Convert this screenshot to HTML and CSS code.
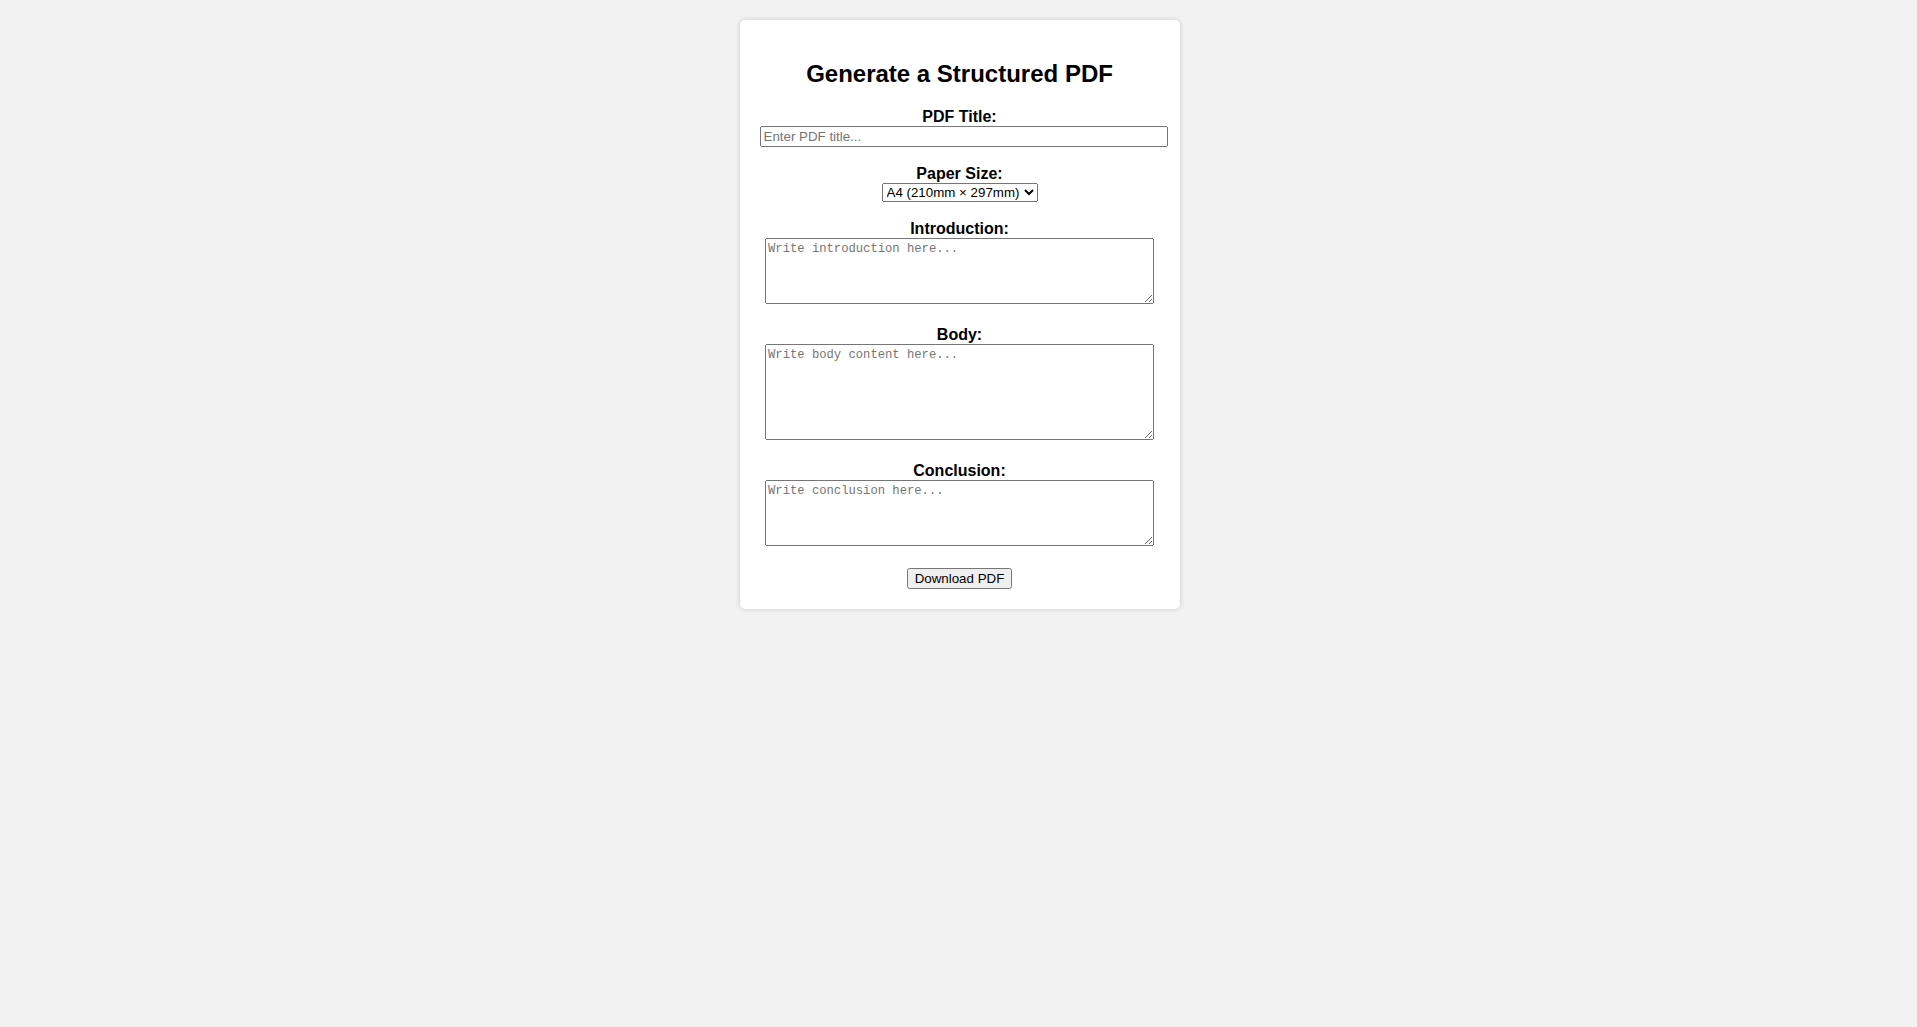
FILE: index.html
```
<!DOCTYPE html>
<html lang="en">
<head>
<meta charset="utf-8">
<title>Generate a Structured PDF</title>
<link rel="stylesheet" href="styles.css">
</head>
<body>
<div class="card">
  <h2 class="title">Generate a Structured PDF</h2>
  <div class="field">
    <label class="label" for="pdfTitle">PDF Title:</label>
    <input class="text-input" id="pdfTitle" type="text" placeholder="Enter PDF title...">
  </div>
  <div class="field field-center">
    <label class="label" for="paperSize">Paper Size:</label>
    <select class="select" id="paperSize">
      <option>A4 (210mm × 297mm)</option>
      <option>Letter (216mm × 279mm)</option>
      <option>Legal (216mm × 356mm)</option>
    </select>
  </div>
  <div class="field field-center field-area">
    <label class="label" for="intro">Introduction:</label>
    <textarea class="area area-short" id="intro" placeholder="Write introduction here..."></textarea>
  </div>
  <div class="field field-center field-area">
    <label class="label" for="body">Body:</label>
    <textarea class="area area-tall" id="body" placeholder="Write body content here..."></textarea>
  </div>
  <div class="field field-center field-last">
    <label class="label" for="conclusion">Conclusion:</label>
    <textarea class="area area-short" id="conclusion" placeholder="Write conclusion here..."></textarea>
  </div>
  <div class="actions">
    <button class="button" type="button">Download PDF</button>
  </div>
</div>
</body>
</html>
```
FILE: styles.css
```
html, body {
  margin: 0;
  padding: 0;
}
body {
  background: #f2f2f2;
  font-family: "Liberation Sans", Arial, sans-serif;
  font-size: 16px;
  color: #000;
  padding-left: 2px;
}
.card {
  width: 400px;
  margin: 20px auto;
  padding: 20px;
  background: #fff;
  border-radius: 5px;
  box-shadow: 0 0 5px rgba(0, 0, 0, 0.18);
  text-align: center;
}
.title {
  font-size: 24px;
  font-weight: bold;
  margin: 20px 0 19.5px;
  line-height: normal;
}
.field {
  display: flex;
  flex-direction: column;
  align-items: flex-start;
  margin-bottom: 18px;
}
.field-center {
  align-items: center;
}
.field-area {
  margin-bottom: 22px;
}
.field-last {
  margin-bottom: 22px;
}
.label {
  display: block;
  align-self: stretch;
  font-weight: bold;
  line-height: normal;
  text-align: center;
}
.text-input {
  display: block;
  width: 100%;
  margin: 0;
  font-family: "Liberation Sans", Arial, sans-serif;
  font-size: 13.333px;
  flex-shrink: 0;
}
.select {
  display: block;
  margin: 0;
  width: 156px;
  height: 19px;
  font-family: "Liberation Sans", Arial, sans-serif;
  font-size: 13.333px;
}
.area {
  display: block;
  box-sizing: border-box;
  width: 389px;
  margin: 0;
  padding: 3px 2px 2px;
  font-family: "Liberation Mono", monospace;
  font-size: 12.2px;
  line-height: 15px;
}
.area-short {
  height: 66px;
}
.area-tall {
  height: 96px;
}
.actions {
  display: flex;
  justify-content: center;
}
.button {
  margin: 0;
  font-family: "Liberation Sans", Arial, sans-serif;
  font-size: 13.333px;
}
```
